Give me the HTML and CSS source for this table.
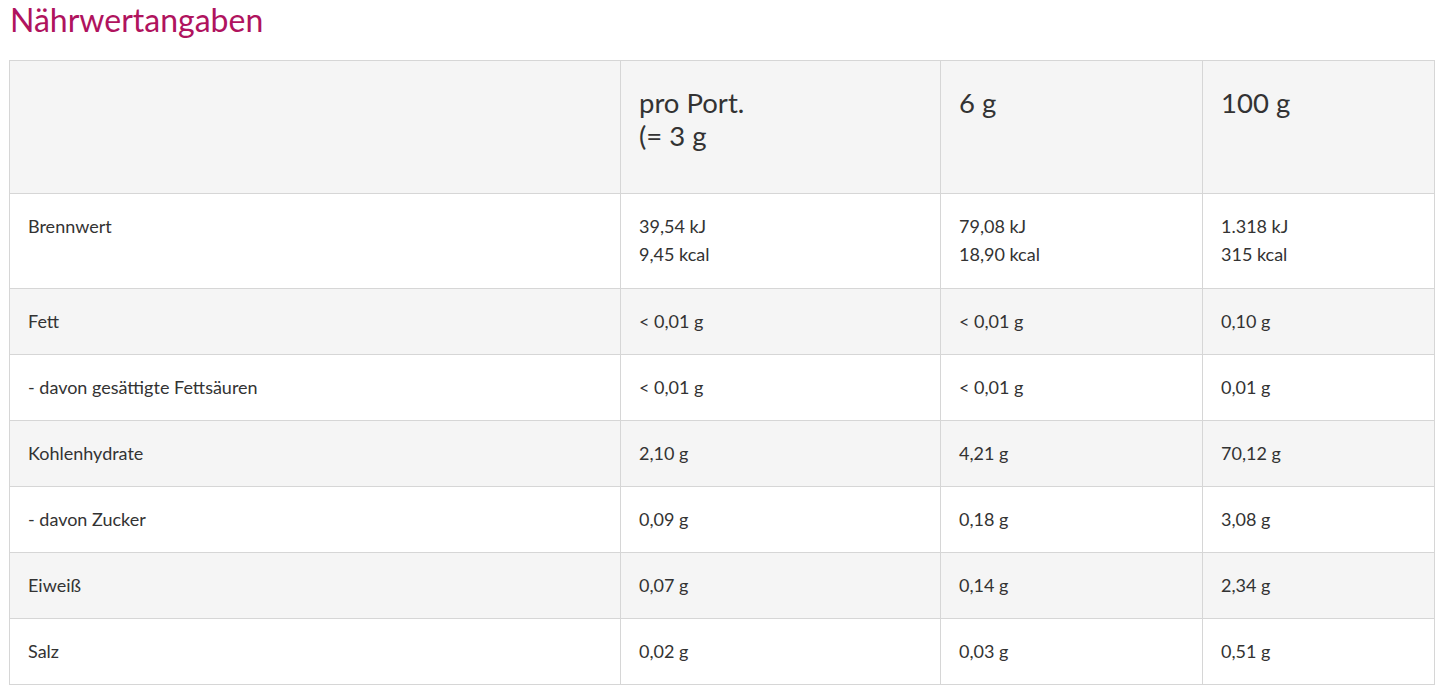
FILE: index.html
```html
<!DOCTYPE html>
<html lang="de">
<head>
<meta charset="utf-8">
<title>Nährwertangaben</title>
<link rel="stylesheet" href="styles.css">
</head>
<body>
<h2 class="title">Nährwertangaben</h2>
<table class="nutri">
  <colgroup>
    <col class="c1"><col class="c2"><col class="c3"><col class="c4">
  </colgroup>
  <thead>
    <tr>
      <th></th>
      <th>pro Port.<br>(= 3 g</th>
      <th>6 g</th>
      <th>100 g</th>
    </tr>
  </thead>
  <tbody>
    <tr class="multi"><td>Brennwert</td><td>39,54 kJ<br>9,45 kcal</td><td>79,08 kJ<br>18,90 kcal</td><td>1.318 kJ<br>315 kcal</td></tr>
    <tr><td>Fett</td><td>&lt; 0,01 g</td><td>&lt; 0,01 g</td><td>0,10 g</td></tr>
    <tr><td>- davon gesättigte Fettsäuren</td><td>&lt; 0,01 g</td><td>&lt; 0,01 g</td><td>0,01 g</td></tr>
    <tr><td>Kohlenhydrate</td><td>2,10 g</td><td>4,21 g</td><td>70,12 g</td></tr>
    <tr><td>- davon Zucker</td><td>0,09 g</td><td>0,18 g</td><td>3,08 g</td></tr>
    <tr><td>Eiweiß</td><td>0,07 g</td><td>0,14 g</td><td>2,34 g</td></tr>
    <tr><td>Salz</td><td>0,02 g</td><td>0,03 g</td><td>0,51 g</td></tr>
  </tbody>
</table>
</body>
</html>
```

FILE: styles.css
```css
html, body {
  margin: 0;
  padding: 0;
  background: #fff;
}
body {
  font-family: Lato, "Open Sans", sans-serif;
  color: #333;
  padding: 0 10px 0 9px;
}
.title {
  margin: 0;
  padding: 1px 0 0 1px;
  height: 60px;
  box-sizing: border-box;
  font-weight: 400;
  font-size: 32px;
  line-height: 38px;
  color: #b0135e;
}
.nutri {
  width: 1426px;
  border-collapse: collapse;
  table-layout: fixed;
  border: 1px solid #d6d6d6;
}
.c1 { width: 611px; }
.c2 { width: 320px; }
.c3 { width: 262px; }
.c4 { width: 232px; }
.nutri th, .nutri td {
  border: 1px solid #d6d6d6;
  text-align: left;
  vertical-align: top;
}
.nutri th {
  font-weight: 400;
  font-size: 27.5px;
  line-height: 33px;
  padding: 25px 18px 41px;
  height: 66px;
  background: #f5f5f5;
}
.nutri td {
  font-size: 18px;
  line-height: 28px;
  padding: 18px 18px 19px;
}
.nutri .multi td {
  padding-bottom: 20px;
}
.nutri tbody tr:nth-child(even) td {
  background: #f5f5f5;
}
```
